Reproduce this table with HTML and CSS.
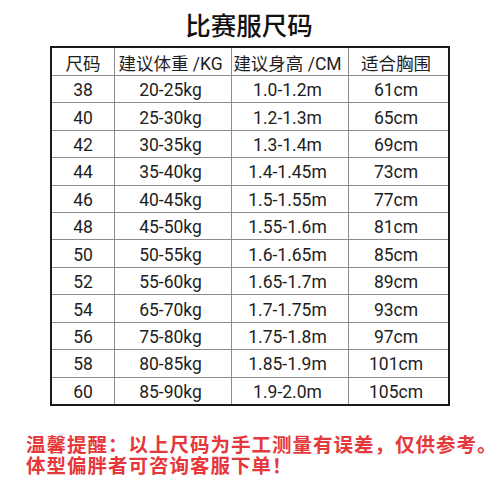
FILE: index.html
```html
<!DOCTYPE html>
<html lang="zh">
<head>
<meta charset="utf-8">
<link rel="stylesheet" href="styles.css">
</head>
<body>
<div class="page">
  <h1 class="title">比赛服尺码</h1>
  <div class="table">
    <div class="cell c1">尺码</div><div class="cell">建议体重 /KG</div><div class="cell">建议身高 /CM</div><div class="cell">适合胸围</div>
    <div class="cell c1">38</div><div class="cell">20-25kg</div><div class="cell">1.0-1.2m</div><div class="cell">61cm</div>
    <div class="cell c1">40</div><div class="cell">25-30kg</div><div class="cell">1.2-1.3m</div><div class="cell">65cm</div>
    <div class="cell c1">42</div><div class="cell">30-35kg</div><div class="cell">1.3-1.4m</div><div class="cell">69cm</div>
    <div class="cell c1">44</div><div class="cell">35-40kg</div><div class="cell">1.4-1.45m</div><div class="cell">73cm</div>
    <div class="cell c1">46</div><div class="cell">40-45kg</div><div class="cell">1.5-1.55m</div><div class="cell">77cm</div>
    <div class="cell c1">48</div><div class="cell">45-50kg</div><div class="cell">1.55-1.6m</div><div class="cell">81cm</div>
    <div class="cell c1">50</div><div class="cell">50-55kg</div><div class="cell">1.6-1.65m</div><div class="cell">85cm</div>
    <div class="cell c1">52</div><div class="cell">55-60kg</div><div class="cell">1.65-1.7m</div><div class="cell">89cm</div>
    <div class="cell c1">54</div><div class="cell">65-70kg</div><div class="cell">1.7-1.75m</div><div class="cell">93cm</div>
    <div class="cell c1">56</div><div class="cell">75-80kg</div><div class="cell">1.75-1.8m</div><div class="cell">97cm</div>
    <div class="cell c1">58</div><div class="cell">80-85kg</div><div class="cell">1.85-1.9m</div><div class="cell">101cm</div>
    <div class="cell c1">60</div><div class="cell">85-90kg</div><div class="cell">1.9-2.0m</div><div class="cell">105cm</div>
  </div>
  <p class="note">温馨提醒：以上尺码为手工测量有误差，仅供参考。<br>体型偏胖者可咨询客服下单！</p>
</div>
</body>
</html>
```
FILE: styles.css
```css
* { box-sizing: border-box; }
html, body {
  margin: 0;
  padding: 0;
  background: #fff;
}
body {
  width: 500px;
  height: 500px;
  overflow: hidden;
  font-family: Roboto, "Noto Sans CJK SC", sans-serif;
  color: #1e1e1e;
}
.page {
  display: flex;
  flex-direction: column;
}
.title {
  margin: 8px 0 0 0;
  height: 38px;
  line-height: 32px;
  text-align: center;
  font-family: "Noto Sans CJK SC", sans-serif;
  font-size: 25.5px;
  font-weight: 500;
  color: #111;
  padding-right: 2px;
}
.table {
  margin-left: 50px;
  width: 400px;
  height: 360px;
  border: 2px solid #1a1a1a;
  background: #8c8c8c;
  display: grid;
  grid-template-columns: 62px 116px 116px 99px;
  grid-template-rows: repeat(13, 1fr);
  gap: 1px;
}
.cell {
  background: #fff;
  display: flex;
  align-items: center;
  justify-content: center;
  font-size: 17.5px;
  padding: 2px 5px 0 0;
  white-space: nowrap;
}
.cell.c1 { padding-right: 0; }
.note {
  margin: 28px 0 0 26px;
  font-family: "Noto Sans CJK SC", sans-serif;
  font-weight: 700;
  font-size: 19.5px;
  letter-spacing: 1px;
  line-height: 20.5px;
  color: #e5383b;
}
```
